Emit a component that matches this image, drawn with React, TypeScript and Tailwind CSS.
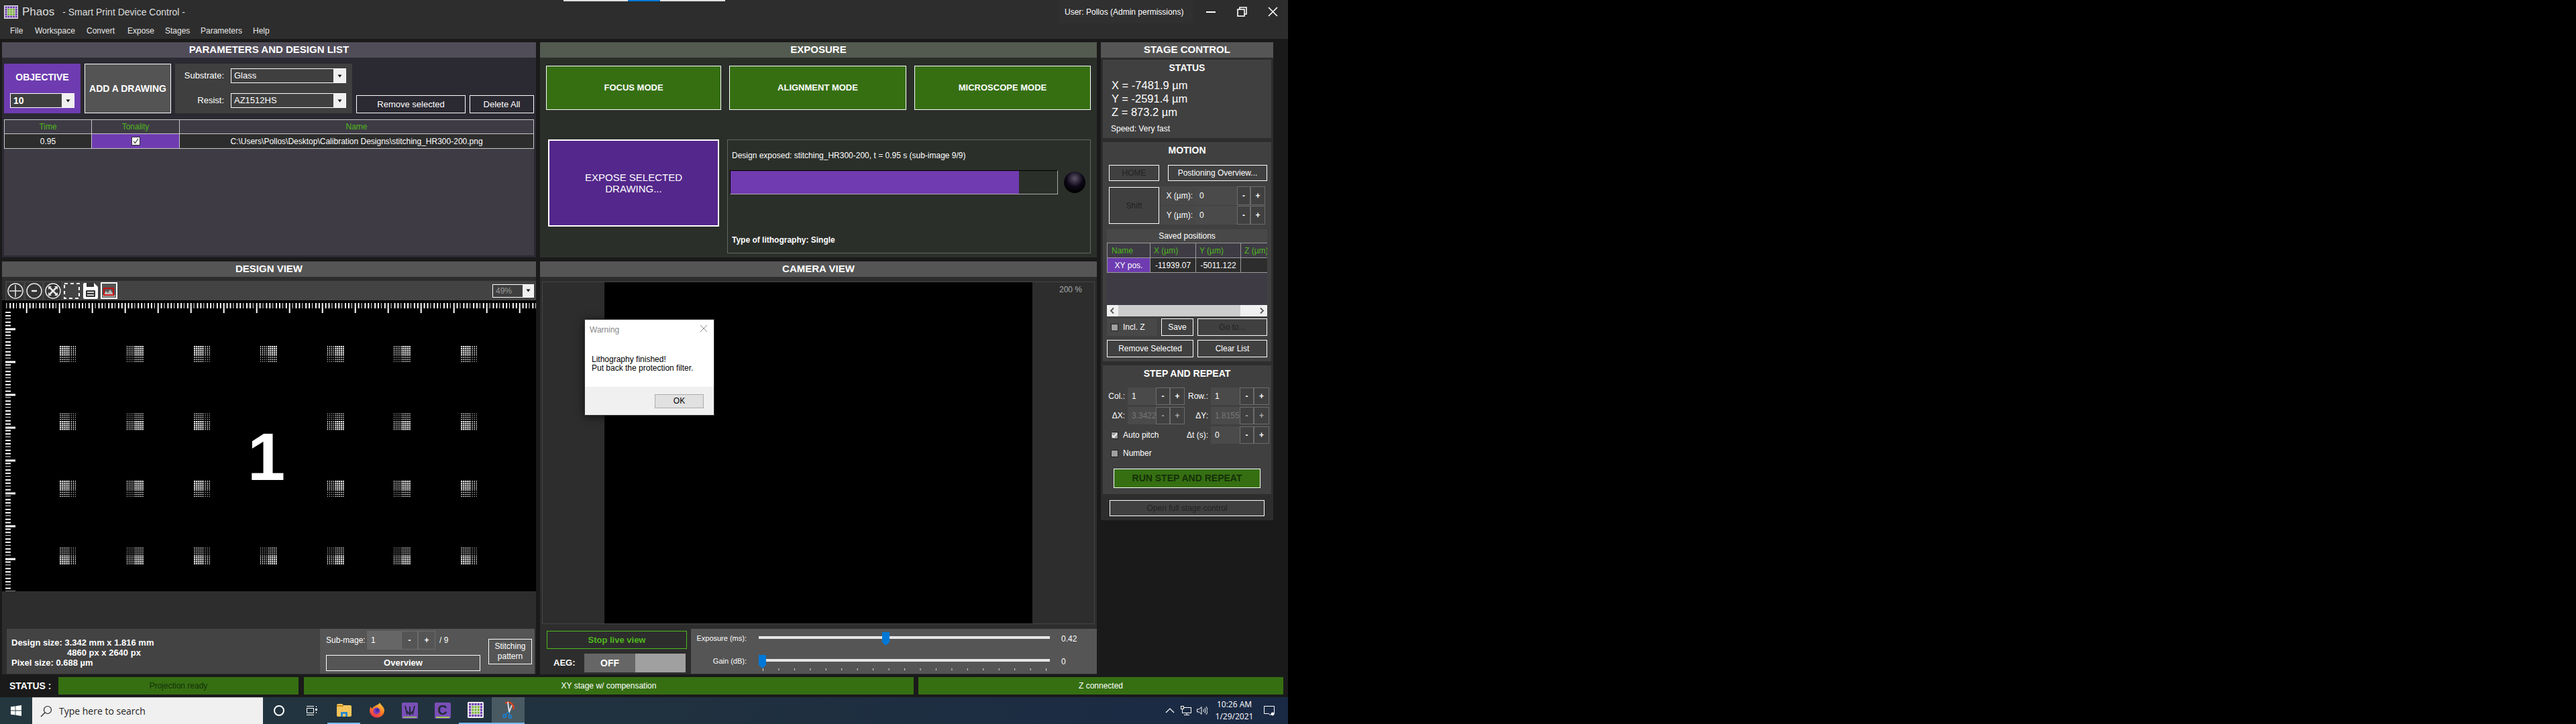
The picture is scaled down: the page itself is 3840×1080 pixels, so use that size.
import type { ReactNode } from "react";

const Btn = ({ className = "", children }: { className?: string; children?: ReactNode }) => (
  <div className={`flex items-center justify-center text-center border border-white box-border shrink-0 ${className}`}>
    {children}
  </div>
);

const Caret = () => (
  <svg width="7" height="5" viewBox="0 0 7 5">
    <path d="M0.5 0.5h6L3.5 4.5z" fill="#111" />
  </svg>
);

const Select = ({ value, className = "", text = "", arrow = "w-[18px]" }: { value: string; className?: string; text?: string; arrow?: string }) => (
  <div className={`flex border border-white box-border bg-[#3f3f3f] items-stretch ${className}`}>
    <div className={`flex-1 pl-1 flex items-center ${text}`}>{value}</div>
    <div className={`bg-[#f0f0f0] flex items-center justify-center ${arrow}`}>
      <Caret />
    </div>
  </div>
);

const Header = ({ title, className }: { title: string; className: string }) => (
  <div className={`h-[23px] flex items-center justify-center text-[15px] font-bold text-white shrink-0 ${className}`}>{title}</div>
);

const Step = ({ className = "", dim = false }: { className?: string; dim?: boolean }) => (
  <div className={`flex items-center justify-center border border-[#6c6c6c] box-border font-bold ${dim ? "text-[#aaa]" : "text-white"} ${className}`}>
    {className.includes("minus") ? "-" : "+"}
  </div>
);

const Check = ({ on = false }: { on?: boolean }) => (
  <div className="w-[11px] h-[11px] border border-[#222] bg-[#a0a0a0] flex items-center justify-center shrink-0">
    {on && (
      <svg width="9" height="9" viewBox="0 0 9 9">
        <path d="M1 4.5l2.3 2.5L8 1.5" stroke="#fff" strokeWidth="1.8" fill="none" />
      </svg>
    )}
  </div>
);

function Pattern({ flipX, flipY }: { flipX: boolean; flipY: boolean }) {
  const cells = [];
  for (let r = 0; r < 9; r++) {
    for (let c = 0; c < 9; c++) {
      const rd = flipY ? 8 - r : r;
      const cd = flipX ? 8 - c : c;
      const h = rd < 5 ? 2 : 1;
      const w = cd < 5 ? 2 : 1;
      cells.push(<rect key={`${r}-${c}`} x={c * 2.85} y={r * 2.85} width={w} height={h} fill="#fff" />);
    }
  }
  return <g>{cells}</g>;
}

function Canvas() {
  const cols = [89, 189, 289, 388, 488, 587, 687];
  const rows = [516, 616.6, 717, 817];
  const top = [];
  for (let i = 0; i < 162; i++) {
    const x = 6.3 + i * 4.9;
    const major = i % 10 === 6;
    top.push(<rect key={i} x={x} y={4} width={major ? 2 : i % 3 === 0 ? 1 : 2} height={major ? 15 : 8} fill="#fff" />);
  }
  const left = [];
  for (let i = 0; i < 86; i++) {
    const y = 17 + i * 4.9;
    const major = i % 10 === 5;
    left.push(<rect key={i} x={5} y={y} width={major ? 15 : 8} height={major ? 3 : i % 3 === 2 ? 1 : 2} fill="#fff" />);
  }
  return (
    <div className="relative h-[434px] bg-black overflow-hidden shrink-0">
      <svg width="796" height="434" viewBox="0 0 796 434" className="block">
        {top}
        {left}
        {rows.map((ry, ri) =>
          cols.map((cx, ci) =>
            ci === 3 && (ri === 1 || ri === 2) ? null : (
              <g key={`${ri}${ci}`} transform={`translate(${cx - 3} ${ry - 448})`}>
                <Pattern flipX={ci % 2 === 1 || ci === 4} flipY={ri % 2 === 1} />
              </g>
            ),
          ),
        )}
      </svg>
      <div className="absolute left-[359px] top-[168px] w-[70px] text-center text-[101px] leading-[130px] font-bold text-white">1</div>
    </div>
  );
}

const ToolIcon = ({ children, className = "bg-[#333]" }: { children: ReactNode; className?: string }) => (
  <div className={`w-[25px] h-[26px] mr-[3px] flex items-center justify-center shrink-0 ${className}`}>{children}</div>
);

function Toolbar() {
  return (
    <div className="h-[29px] ml-[5px] bg-[#434343] flex items-center pl-[2px] pr-[3px] shrink-0">
      <ToolIcon>
        <svg width="24" height="24" viewBox="0 0 24 24" fill="none" stroke="#e8e8e8" strokeWidth="1.5">
          <circle cx="12" cy="12" r="11" />
          <path d="M12 3v18M3 12h18" />
        </svg>
      </ToolIcon>
      <ToolIcon>
        <svg width="24" height="24" viewBox="0 0 24 24" fill="none" stroke="#e8e8e8" strokeWidth="1.5">
          <circle cx="12" cy="12" r="11" />
          <path d="M8 12h8" strokeWidth="2.5" />
        </svg>
      </ToolIcon>
      <ToolIcon>
        <svg width="24" height="24" viewBox="0 0 24 24" fill="none" stroke="#e8e8e8" strokeWidth="1.5">
          <circle cx="12" cy="12" r="11" />
          <path d="M6 6l12 12M18 6L6 18" strokeWidth="2.5" />
          <path d="M5 5h5L5 10zM19 5h-5l5 5zM5 19h5l-5-5zM19 19h-5l5-5z" fill="#e8e8e8" stroke="none" />
        </svg>
      </ToolIcon>
      <ToolIcon className="bg-transparent">
        <svg width="24" height="24" viewBox="0 0 24 24" fill="none" stroke="#fff" strokeWidth="2.2" strokeDasharray="5 4">
          <rect x="1" y="1" width="22" height="22" />
        </svg>
      </ToolIcon>
      <ToolIcon className="bg-transparent">
        <svg width="24" height="26" viewBox="0 0 24 26">
          <path d="M1 3q0-2 2-2h14l6 6v16q0 2-2 2H3q-2 0-2-2z" fill="#fff" />
          <rect x="6" y="1" width="11" height="6" fill="#333" />
          <rect x="5" y="12" width="14" height="10" rx="1" fill="#333" />
          <path d="M7 15h10M7 19h10" stroke="#fff" strokeWidth="1.5" />
        </svg>
      </ToolIcon>
      <div className="w-[25px] h-[25px] border-2 border-white bg-[#555] flex items-center justify-center shrink-0">
        <svg width="21" height="21" viewBox="0 0 21 21">
          <path d="M2 17l4-6 3 3 3-5 6 8z" fill="#bbb" />
          <rect x="1" y="17" width="19" height="3" fill="#999" />
          <rect x="3" y="7" width="14" height="10" fill="none" stroke="#e00000" strokeWidth="1.6" />
        </svg>
      </div>
      <div className="ml-auto">
        <Select value="49%" className="w-[62px] h-[20px] text-[12px] text-[#999]" arrow="w-[16px]" />
      </div>
    </div>
  );
}

function ParamPanel() {
  return (
    <div className="h-[321px] flex flex-col bg-[#2b2932]">
      <Header title="PARAMETERS AND DESIGN LIST" className="bg-[#504c58]" />
      <div className="flex mt-[9px] ml-[3px] h-[74px]">
        <div className="w-[114px] bg-[#6e3cb0] flex flex-col items-center shrink-0">
          <div className="mt-[10px] text-[14px] leading-[20px] font-bold text-white">OBJECTIVE</div>
          <Select value="10" className="w-[96px] h-[22px] mt-[14px] text-[14px] font-bold text-white" />
        </div>
        <Btn className="w-[129px] ml-[6px] bg-[#545454] font-bold text-[14px] text-white">ADD A DRAWING</Btn>
        <div className="w-[264px] ml-[6px] bg-[#3f3f3f] pt-[7px] shrink-0">
          <div className="flex items-center h-[22px]">
            <div className="w-[73px] text-right text-[13px] text-white">Substrate:</div>
            <Select value="Glass" className="w-[172px] h-[22px] ml-[10px] text-[13px] text-white" />
          </div>
          <div className="flex items-center h-[22px] mt-[15px]">
            <div className="w-[73px] text-right text-[13px] text-white">Resist:</div>
            <Select value="AZ1512HS" className="w-[172px] h-[22px] ml-[10px] text-[13px] text-white" />
          </div>
        </div>
        <div className="flex items-end">
          <Btn className="w-[163px] h-[27px] ml-[6px] text-[13px] text-white">Remove selected</Btn>
          <Btn className="w-[96px] h-[27px] ml-[6px] text-[13px] text-white">Delete All</Btn>
        </div>
      </div>
      <div className="mt-[9px] ml-[3px] w-[790px] h-[203px] bg-[#3e3b45] text-[12px] shrink-0">
        <div className="grid grid-cols-[130px_131px_1fr] border border-[#c8c8c8]">
          <div className="h-[20px] flex items-center justify-center text-[#4fb81c] border-r border-[#c8c8c8]">Time</div>
          <div className="h-[20px] flex items-center justify-center text-[#4fb81c] border-r border-[#c8c8c8]">Tonality</div>
          <div className="h-[20px] flex items-center justify-center text-[#4fb81c]">Name</div>
          <div className="h-[22px] flex items-center justify-center text-white bg-[#2d2d2d] border-t border-r border-[#c8c8c8]">0.95</div>
          <div className="h-[22px] flex items-center justify-center bg-[#6e3cb0] border-t border-r border-[#c8c8c8]">
            <div className="w-[13px] h-[13px] bg-white border border-[#333] flex items-center justify-center">
              <svg width="9" height="9" viewBox="0 0 9 9">
                <path d="M1 4.5l2.3 3L8 1" stroke="#333" strokeWidth="1.2" fill="none" />
              </svg>
            </div>
          </div>
          <div className="h-[22px] flex items-center justify-center text-white bg-[#2d2d2d] border-t border-[#c8c8c8]">
            {"C:\\Users\\Pollos\\Desktop\\Calibration Designs\\stitching_HR300-200.png"}
          </div>
        </div>
      </div>
    </div>
  );
}

function DesignPanel() {
  return (
    <div className="h-[616px] mt-[6px] flex flex-col bg-[#2d2d2d]">
      <Header title="DESIGN VIEW" className="bg-[#555]" />
      <div className="mt-[6px]">
        <Toolbar />
      </div>
      <Canvas />
      <div className="mt-[56px] ml-[7px] w-[787px] h-[67px] flex shrink-0">
        <div className="w-[467px] bg-[#434343] pt-[13px] pl-[7px] text-[13px] leading-[15px] font-bold text-white">
          <div>Design size: 3.342 mm x 1.816 mm</div>
          <div className="pl-[83px]">4860 px x 2640 px</div>
          <div>Pixel size: 0.688 µm</div>
        </div>
        <div className="w-[320px] bg-[#555] flex text-white text-[12px]">
          <div className="w-[239px] ml-[9px] pt-[3px]">
            <div className="flex items-center h-[28px]">
              <div className="w-[61px] text-[12px]">Sub-mage:</div>
              <div className="w-[51px] h-[28px] bg-[#666] pl-[6px] flex items-center">1</div>
              <Step className="w-[25px] h-[28px] minus" />
              <Step className="w-[26px] h-[28px]" />
              <div className="ml-[6px]">/ 9</div>
            </div>
            <Btn className="w-[230px] h-[24px] mt-[8px] font-bold text-[13px]">Overview</Btn>
          </div>
          <Btn className="w-[65px] h-[38px] mt-[15px] ml-[3px] leading-[15px]">
            Stitching
            <br />
            pattern
          </Btn>
        </div>
      </div>
    </div>
  );
}

function ExposurePanel() {
  return (
    <div className="h-[321px] flex flex-col bg-[#2b2f2a]">
      <Header title="EXPOSURE" className="bg-[#535a4f]" />
      <div className="flex mt-[12px] ml-[9px] text-white font-bold text-[13px]">
        <Btn className="w-[261px] h-[66px] bg-[#366f12]">FOCUS MODE</Btn>
        <Btn className="w-[264px] h-[66px] ml-[12px] bg-[#366f12]">ALIGNMENT MODE</Btn>
        <Btn className="w-[263px] h-[66px] ml-[12px] bg-[#366f12]">MICROSCOPE MODE</Btn>
      </div>
      <div className="flex mt-[44px] ml-[12px]">
        <div className="w-[255px] h-[130px] border-2 border-white box-border bg-[#54278c] flex items-center justify-center text-center text-white text-[15px] leading-[17px] shrink-0">
          EXPOSE SELECTED
          <br />
          DRAWING...
        </div>
        <div className="w-[542px] h-[170px] ml-[12px] border border-[#666] box-border pt-[15px] pl-[6px] text-white text-[12px]">
          <div className="leading-[16px]">Design exposed: stitching_HR300-200, t = 0.95 s (sub-image 9/9)</div>
          <div className="flex items-center mt-[14px] -ml-[3px]">
            <div className="w-[489px] h-[36px] border-t border-t-black border-l border-l-black border-r border-r-[#aaa] border-b border-b-[#aaa] box-border">
              <div className="w-[430px] h-full bg-[#703bb0]" />
            </div>
            <div className="w-[32px] h-[32px] ml-[9px] rounded-full bg-[radial-gradient(circle_at_50%_32%,#5e5468,#0d0818_45%,#000_75%)]" />
          </div>
          <div className="mt-[60px] leading-[16px] font-bold">Type of lithography: Single</div>
        </div>
      </div>
    </div>
  );
}

function Slider({ label, value, at, className = "" }: { label: string; value: string; at: string; className?: string }) {
  return (
    <div className={`flex items-center h-[19px] ${className}`}>
      <div className="w-[83px] text-right text-[11px]">{label}</div>
      <div className="relative w-[434px] h-[19px] ml-[18px]">
        <div className="absolute left-0 right-0 top-[6px] h-[4px] bg-[#e6e6e6]" />
        <div className={`absolute top-0 w-[11px] h-[15px] bg-[#0078d7] ${at}`} />
        <svg className={`absolute top-[15px] ${at}`} width="11" height="5" viewBox="0 0 11 5">
          <path d="M0 0h11L5.5 5z" fill="#0078d7" />
        </svg>
      </div>
      <div className="ml-[17px]">{value}</div>
    </div>
  );
}

function CameraPanel() {
  const ticks = [];
  for (let i = 0; i < 19; i++) ticks.push(<rect key={i} x={6 + i * 23.45} y={0} width={1} height={i === 0 || i === 18 ? 4 : 3} fill="#ddd" />);
  return (
    <div className="relative h-[616px] mt-[6px] flex flex-col bg-[#2d2d2d]">
      <Header title="CAMERA VIEW" className="bg-[#555]" />
      <div className="mx-[3px] mt-[7px] h-[511px] border border-[#444] box-border bg-[#2d2d2d] flex shrink-0">
        <div className="w-[92px]" />
        <div className="w-[638px] bg-black" />
        <div className="flex-1 text-right pr-[18px] pt-[2px] text-[12px] text-[#aaa]">200 %</div>
      </div>
      <div className="mt-[7px] flex h-[67px] shrink-0">
        <div className="w-[225px] text-white">
          <div className="mt-[3px] ml-[10px] w-[209px] h-[27px] border border-[#4fb81c] box-border bg-[#2d2d2d] flex items-center justify-center font-bold text-[13px] text-[#4fb81c]">
            Stop live view
          </div>
          <div className="flex items-center mt-[7px]">
            <div className="w-[46px] ml-[20px] font-bold text-[13px]">AEG:</div>
            <div className="w-[151px] h-[28px] flex">
              <div className="w-[76px] bg-[#666] flex items-center justify-center font-bold text-[14px]">OFF</div>
              <div className="w-[75px] bg-[#a0a0a0]" />
            </div>
          </div>
        </div>
        <div className="w-[605px] bg-[#555] pt-[5px] text-[12px] text-white">
          <Slider label="Exposure (ms):" value="0.42" at="left-[184px]" />
          <Slider label="Gain (dB):" value="0" at="left-0" className="mt-[15px]" />
          <svg width="434" height="4" viewBox="0 0 434 4" className="ml-[101px] mt-[1px]">
            {ticks}
          </svg>
        </div>
      </div>
      <div className="absolute left-[66px] top-[86px] w-[194px] h-[144px] border border-[#333] box-border bg-white shadow-[0_2px_12px_rgba(0,0,0,0.6)] flex flex-col text-[12px] text-black">
        <div className="flex justify-between pt-[6px] pl-[7px] pr-[9px] text-[#888]">
          <span>Warning</span>
          <svg width="12" height="12" viewBox="0 0 12 12" className="mt-[1px]">
            <path d="M1 1l10 10M11 1L1 11" stroke="#888" strokeWidth="1" />
          </svg>
        </div>
        <div className="mt-[29px] pl-[10px] leading-[13px]">
          Lithography finished!
          <br />
          Put back the protection filter.
        </div>
        <div className="mt-auto h-[42px] bg-[#f0f0f0] flex justify-end items-center pr-[15px]">
          <div className="w-[73px] h-[21px] bg-[#e1e1e1] border border-[#adadad] flex items-center justify-center">OK</div>
        </div>
      </div>
    </div>
  );
}

function StagePanel() {
  return (
    <div className="w-[257px] h-[713px] bg-[#2d2d2d] flex flex-col text-white text-[12px] shrink-0">
      <Header title="STAGE CONTROL" className="bg-[#555]" />
      <div className="mx-[3px] mt-[3px] h-[117px] bg-[#404040] shrink-0">
        <div className="h-[24px] flex items-center justify-center font-bold text-[14px]">STATUS</div>
        <div className="mt-[4px] pl-[13px] text-[16.5px] leading-[20px]">
          <div>X = -7481.9 µm</div>
          <div>Y = -2591.4 µm</div>
          <div>Z = 873.2 µm</div>
        </div>
        <div className="mt-[7px] pl-[12px] leading-[16px]">Speed: Very fast</div>
      </div>

      <div className="mx-[3px] mt-[6px] h-[327px] bg-[#404040] shrink-0">
        <div className="h-[24px] flex items-center justify-center font-bold text-[14px]">MOTION</div>
        <div className="flex mt-[10px] ml-[9px]">
          <Btn className="w-[75px] h-[24px] text-[#222]">HOME</Btn>
          <Btn className="w-[148px] h-[24px] ml-[13px]">Postioning Overview...</Btn>
        </div>
        <div className="flex mt-[8px] ml-[9px]">
          <Btn className="w-[75px] h-[55px] mt-[1px] text-[#222]">Shift</Btn>
          <div className="flex flex-col gap-[1px]">
            {["X (µm):", "Y (µm):"].map((l) => (
              <div key={l} className="flex h-[28px]">
                <div className="w-[54px] bg-[#484848] pr-[4px] flex items-center justify-end">{l}</div>
                <div className="w-[62px] bg-[#4a4a4a] pl-[6px] flex items-center">0</div>
                <Step className="w-[20px] minus" />
                <Step className="w-[22px]" />
              </div>
            ))}
          </div>
        </div>
        <div className="ml-[6px] mt-[7px] w-[239px]">
          <div className="h-[20px] bg-[#484848] flex items-center justify-center">Saved positions</div>
          <div className="h-[93px] bg-[#3e3b45] overflow-hidden">
            <div className="flex h-[23px] text-[#4fb81c] border-y border-[#9a9a9a] box-border">
              <div className="w-[65px] pl-[6px] flex items-center border-x border-[#9a9a9a]">Name</div>
              <div className="w-[68px] pl-[5px] flex items-center border-r border-[#9a9a9a]">X (µm)</div>
              <div className="w-[67px] pl-[5px] flex items-center border-r border-[#9a9a9a]">Y (µm)</div>
              <div className="flex-1 pl-[5px] flex items-center whitespace-nowrap overflow-hidden">Z (µm)</div>
            </div>
            <div className="flex h-[22px] border-b border-[#9a9a9a] box-border">
              <div className="w-[65px] bg-[#6e3cb0] flex items-center justify-center border-x border-[#9a9a9a]">XY pos.</div>
              <div className="w-[68px] bg-[#2d2d2d] flex items-center justify-center border-r border-[#9a9a9a]">-11939.07</div>
              <div className="w-[67px] bg-[#2d2d2d] flex items-center justify-center border-r border-[#9a9a9a]">-5011.122</div>
              <div className="flex-1 bg-[#2d2d2d]" />
            </div>
          </div>
          <div className="h-[17px] bg-[#f0f0f0] flex items-center">
            <svg width="17" height="17" viewBox="0 0 17 17" className="shrink-0">
              <path d="M10 4.5L6 8.5l4 4" stroke="#555" strokeWidth="1.8" fill="none" />
            </svg>
            <div className="w-[182px] h-[17px] bg-[#cdcdcd]" />
            <div className="flex-1 flex justify-end">
              <svg width="17" height="17" viewBox="0 0 17 17">
                <path d="M7 4.5l4 4-4 4" stroke="#555" strokeWidth="1.8" fill="none" />
              </svg>
            </div>
          </div>
          <div className="flex mt-[3px]">
            <div className="w-[75px] h-[26px] bg-[#484848] flex items-center pl-[6px]">
              <Check />
              <span className="ml-[7px]">Incl. Z</span>
            </div>
            <Btn className="w-[48px] h-[26px] ml-[6px]">Save</Btn>
            <Btn className="w-[104px] h-[26px] ml-[6px] text-[#222]">Go to...</Btn>
          </div>
          <div className="flex mt-[6px]">
            <Btn className="w-[129px] h-[26px]">Remove Selected</Btn>
            <Btn className="w-[104px] h-[26px] ml-[6px]">Clear List</Btn>
          </div>
        </div>
      </div>

      <div className="mx-[3px] mt-[6px] h-[192px] bg-[#404040] shrink-0">
        <div className="h-[24px] flex items-center justify-center font-bold text-[14px]">STEP AND REPEAT</div>
        <div className="flex h-[26px] mt-[9px] items-stretch">
          <div className="w-[33px] flex items-center justify-end">Col.:</div>
          <div className="w-[42px] ml-[4px] bg-[#4a4a4a] pl-[6px] flex items-center">1</div>
          <Step className="w-[21px] minus" />
          <Step className="w-[22px]" />
          <div className="w-[35px] flex items-center justify-end">Row.:</div>
          <div className="w-[43px] ml-[4px] bg-[#4a4a4a] pl-[6px] flex items-center">1</div>
          <Step className="w-[21px] minus" />
          <Step className="w-[23px]" />
        </div>
        <div className="flex h-[26px] mt-[3px] items-stretch">
          <div className="w-[33px] flex items-center justify-end">ΔX:</div>
          <div className="w-[42px] ml-[4px] bg-[#4a4a4a] pl-[6px] flex items-center text-[#777] overflow-hidden whitespace-nowrap">3.3422</div>
          <Step dim className="w-[21px] minus" />
          <Step dim className="w-[22px]" />
          <div className="w-[35px] flex items-center justify-end">ΔY:</div>
          <div className="w-[43px] ml-[4px] bg-[#4a4a4a] pl-[6px] flex items-center text-[#777] overflow-hidden whitespace-nowrap">1.8155</div>
          <Step dim className="w-[21px] minus" />
          <Step dim className="w-[23px]" />
        </div>
        <div className="flex h-[26px] mt-[3px] items-stretch">
          <div className="w-[122px] flex items-center pl-[12px]">
            <Check on />
            <span className="ml-[7px]">Auto pitch</span>
          </div>
          <div className="w-[35px] flex items-center justify-end whitespace-nowrap">Δt (s):</div>
          <div className="w-[43px] ml-[4px] bg-[#4a4a4a] pl-[6px] flex items-center">0</div>
          <Step className="w-[21px] minus" />
          <Step className="w-[23px]" />
        </div>
        <div className="flex items-center h-[16px] mt-[6px] pl-[12px]">
          <Check />
          <span className="ml-[7px]">Number</span>
        </div>
        <Btn className="w-[219px] h-[29px] mt-[15px] ml-[16px] bg-[#366f12] font-bold text-[14px] text-[#143008]">RUN STEP AND REPEAT</Btn>
      </div>
      <Btn className="w-[231px] h-[24px] mt-[9px] ml-[13px] bg-[#404040] text-[#222]">Open full stage control</Btn>
    </div>
  );
}

const TaskSlot = ({ children, active = false, lit = false }: { children: ReactNode; active?: boolean; lit?: boolean }) => (
  <div className={`w-[49px] h-[40px] flex items-center justify-center box-border shrink-0 ${active ? "border-b-2 border-[#76b9ed]" : ""} ${lit ? "bg-[#4a5a62]" : ""}`}>
    {children}
  </div>
);

function Taskbar() {
  return (
    <div className="h-[40px] flex items-center bg-[linear-gradient(90deg,#24373f,#20303f_55%,#1a2944)] shrink-0">
      <div className="w-[48px] h-[40px] flex items-center justify-center shrink-0">
        <svg width="16" height="16" viewBox="0 0 16 16" fill="#fff">
          <path d="M0 2.3l6.6-.9v6.2H0zM7.4 1.3L16 0v7.6H7.4zM0 8.4h6.6v6.2L0 13.7zM7.4 8.4H16V16l-8.6-1.3z" />
        </svg>
      </div>
      <div className="w-[344px] h-[40px] bg-[#f0f0f0] flex items-center pl-[12px] text-[#222] text-[14px] font-['Open_Sans',sans-serif] shrink-0 border-t border-[#bbb] box-border">
        <svg width="18" height="18" viewBox="0 0 18 18" fill="none" stroke="#222" strokeWidth="1.2">
          <circle cx="11" cy="7" r="5.5" />
          <path d="M7 11l-6 6" />
        </svg>
        <span className="ml-[10px]">Type here to search</span>
      </div>
      <div className="w-[48px] flex justify-center shrink-0">
        <div className="w-[16px] h-[16px] rounded-full border-2 border-white" />
      </div>
      <div className="w-[48px] flex justify-center shrink-0">
        <svg width="17" height="16" viewBox="0 0 17 16" fill="none" stroke="#fff" strokeWidth="1">
          <rect x="1.5" y="4.5" width="10" height="7" />
          <path d="M1 1.5h11M1 14.5h11" />
          <rect x="14" y="5" width="3" height="3" fill="#fff" stroke="none" />
          <path d="M15.5 1v2M15.5 10v2" />
        </svg>
      </div>
      <div className="w-[3px]" />
      <TaskSlot active>
        <svg width="22" height="19" viewBox="0 0 22 19">
          <path d="M0 2q0-2 2-2h6l2 2h10q2 0 2 2v13q0 2-2 2H2q-2 0-2-2z" fill="#f4c45c" />
          <rect x="0" y="2" width="10" height="2" fill="#c98f20" />
          <path d="M6 19v-7h10v7h-3v-4H9v4z" fill="#2b8ad0" />
        </svg>
      </TaskSlot>
      <TaskSlot>
        <svg width="24" height="24" viewBox="0 0 24 24">
          <defs>
            <linearGradient id="ff" x1="0.7" y1="0" x2="0.2" y2="1">
              <stop offset="0" stopColor="#ffc83a" />
              <stop offset="0.5" stopColor="#ff7a22" />
              <stop offset="1" stopColor="#e3245c" />
            </linearGradient>
          </defs>
          <path d="M16 0c1 3 6 6 7 11a11 11 0 1 1-22 1c0-3 1-5 2-6 0 2 1 3 2 3 1-3 5-4 8-6 2-1 3-2 3-3z" fill="url(#ff)" />
          <circle cx="11.5" cy="12.5" r="5" fill="#7c3ab8" />
          <circle cx="12.5" cy="11.5" r="2.4" fill="#3b2ea0" />
        </svg>
      </TaskSlot>
      <TaskSlot>
        <svg width="24" height="24" viewBox="0 0 24 24">
          <rect width="24" height="24" rx="1.5" fill="#7a4fb8" />
          <path d="M5 5l3 13M19 5l-3 13M12 6v12M8 13l4 5 4-5" stroke="#1e2a35" strokeWidth="1.8" fill="none" />
          <rect x="2" y="21" width="20" height="1.5" fill="#9ed24a" />
        </svg>
      </TaskSlot>
      <TaskSlot>
        <div className="w-[24px] h-[24px] bg-[#7a4fb8] rounded-[2px] flex flex-col items-center justify-end text-[#1e2a35] font-bold text-[20px] leading-[20px] font-['Liberation_Sans',sans-serif]">
          C
          <div className="w-[20px] h-[1.5px] mb-[1.5px] bg-[#9ed24a]" />
        </div>
      </TaskSlot>
      <TaskSlot active>
        <svg width="24" height="24" viewBox="0 0 24 24">
          <rect width="24" height="24" rx="1.5" fill="#eee" />
          {[0, 1, 2, 3, 4].map((r) =>
            [0, 1, 2, 3, 4].map((c) => (
              <rect key={`${r}${c}`} x={2 + c * 4.2} y={2 + r * 4.2} width="3.2" height="3.2" fill={r > 0 && r < 4 && c > 0 && c < 4 ? "#7db43a" : "#6e3cb0"} />
            )),
          )}
        </svg>
      </TaskSlot>
      <TaskSlot active lit>
        <svg width="20" height="26" viewBox="0 0 20 26" fill="none">
          <path d="M5 3a8 8 0 0 1 12 9" stroke="#d8401c" strokeWidth="2.5" />
          <path d="M9 1l2 15 4-10" stroke="#ddd" strokeWidth="2" />
          <path d="M9 16l-4 5M10 16l2 6" stroke="#1d7fd0" strokeWidth="1.5" />
          <circle cx="4" cy="22" r="2.2" stroke="#1d7fd0" strokeWidth="1.8" />
          <circle cx="12.5" cy="23" r="2.2" stroke="#1d7fd0" strokeWidth="1.8" />
        </svg>
      </TaskSlot>
      <div className="ml-[950px] w-[24px] flex justify-center shrink-0">
        <svg width="14" height="8" viewBox="0 0 14 8" fill="none" stroke="#fff" strokeWidth="1.2">
          <path d="M1 7l6-6 6 6" />
        </svg>
      </div>
      <div className="w-[24px] flex justify-center shrink-0">
        <svg width="16" height="14" viewBox="0 0 16 14" fill="none" stroke="#fff" strokeWidth="1">
          <rect x="2.5" y="2.5" width="13" height="8" />
          <rect x="0.5" y="0.5" width="4" height="4" fill="#223" />
          <path d="M9 11v2M5 13.5h8" />
        </svg>
      </div>
      <div className="w-[24px] flex justify-center shrink-0">
        <svg width="16" height="14" viewBox="0 0 16 14" fill="none" stroke="#fff" strokeWidth="1">
          <path d="M0.5 5h3l3.5-3.5v11L3.5 9h-3zM10 5q1 2 0 4M12 3q2.5 4 0 8M14 1q4 6 0 12" />
        </svg>
      </div>
      <div className="w-[72px] text-center text-[12px] leading-[18px] text-white font-['Open_Sans',sans-serif] shrink-0">
        <div>10:26 AM</div>
        <div>1/29/2021</div>
      </div>
      <div className="ml-[8px] w-[16px] shrink-0">
        <svg width="16" height="15" viewBox="0 0 16 15" fill="none" stroke="#fff" strokeWidth="1">
          <path d="M0.5 0.5h15v11h-4l-2 2.5-2-2.5h-7z" />
          <circle cx="13" cy="12" r="2" fill="#fff" />
        </svg>
      </div>
      <div className="ml-[20px] w-px h-[40px] bg-[#5a7a94]" />
    </div>
  );
}

export default function App() {
  return (
    <div className="w-[3840px] h-[1080px] bg-black overflow-hidden font-['Liberation_Sans',Arial,sans-serif]">
      <div className="w-[1920px] h-[1080px] bg-[#1a1a1a] flex flex-col">
        <div className="h-[58px] bg-[#2d2d2d] flex flex-col relative shrink-0">
          <div className="absolute left-[840px] top-0 w-[241px] h-[2px] bg-[#e0e0e0]">
            <div className="ml-[96px] w-[48px] h-[2px] bg-[#0078d7]" />
          </div>
          <div className="flex items-start h-[35px]">
            <svg width="21" height="20" viewBox="0 0 21 20" className="ml-[6px] mt-[8px]">
              <rect width="21" height="20" fill="#ddd" />
              {[0, 1, 2, 3, 4].map((r) =>
                [0, 1, 2, 3, 4].map((c) => (
                  <rect key={`${r}${c}`} x={1.5 + c * 3.8} y={1.5 + r * 3.5} width="3" height="2.8" fill={r > 0 && r < 4 && c > 0 && c < 4 ? "#7db43a" : "#6e3cb0"} />
                )),
              )}
            </svg>
            <div className="ml-[6px] mt-[8px] text-[17px] leading-[20px] text-[#ddd]">Phaos</div>
            <div className="ml-[12px] mt-[10px] text-[14px] leading-[16px] text-[#ddd]">- Smart Print Device Control -</div>
            <div className="ml-auto w-[200px] h-[35px] bg-[#303030] flex items-center pl-[9px] text-[12px] text-white">
              User: Pollos (Admin permissions)
            </div>
            <div className="w-[20px]" />
            <div className="w-[46px] h-[35px] flex items-center">
              <div className="w-[14px] h-[2px] bg-white" />
            </div>
            <div className="w-[46px] h-[35px] flex items-center">
              <svg width="15" height="15" viewBox="0 0 15 15" fill="none" stroke="#fff" strokeWidth="1.6">
                <rect x="1" y="4" width="10" height="10" />
                <path d="M4 4V1h10v10h-3" />
              </svg>
            </div>
            <div className="w-[30px] h-[35px] flex items-center">
              <svg width="15" height="15" viewBox="0 0 15 15" stroke="#fff" strokeWidth="1.6">
                <path d="M1 1l13 13M14 1L1 14" />
              </svg>
            </div>
          </div>
          <div className="flex text-[12px] text-[#e8e8e8] leading-[22px]">
            <span className="ml-[15px] w-[37px]">File</span>
            <span className="w-[77px]">Workspace</span>
            <span className="w-[61px]">Convert</span>
            <span className="w-[56px]">Expose</span>
            <span className="w-[53px]">Stages</span>
            <span className="w-[78px]">Parameters</span>
            <span>Help</span>
          </div>
        </div>

        <div className="flex mt-[5px] ml-[3px] h-[943px] shrink-0">
          <div className="w-[796px] flex flex-col shrink-0">
            <ParamPanel />
            <DesignPanel />
          </div>
          <div className="w-[830px] ml-[6px] flex flex-col shrink-0">
            <ExposurePanel />
            <CameraPanel />
          </div>
          <div className="ml-[6px]">
            <StagePanel />
          </div>
        </div>

        <div className="flex h-[26px] mt-[4px] shrink-0 text-[12px]">
          <div className="w-[87px] pl-[14px] flex items-center font-bold text-[14px] text-white">STATUS :</div>
          <div className="w-[358px] bg-[#366f12] flex items-center justify-center text-[#143008]">Projection ready</div>
          <div className="w-[909px] ml-[8px] bg-[#366f12] flex items-center justify-center text-white">XY stage w/ compensation</div>
          <div className="w-[544px] ml-[7px] bg-[#366f12] flex items-center justify-center text-white">Z connected</div>
        </div>
        <div className="h-[4px] shrink-0" />
        <Taskbar />
      </div>
    </div>
  );
}
